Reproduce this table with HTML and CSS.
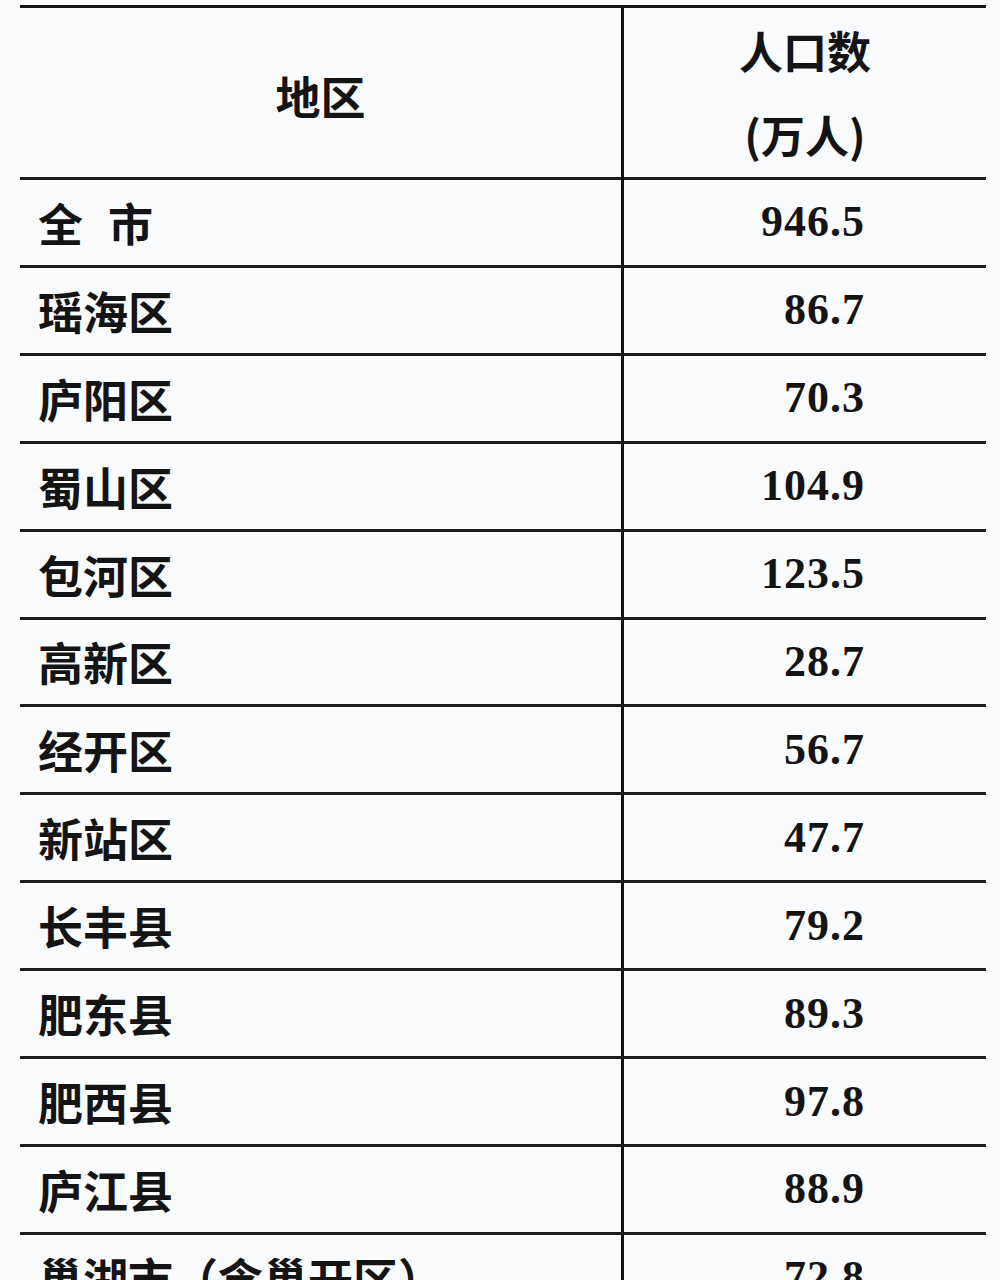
FILE: index.html
```html
<!DOCTYPE html>
<html lang="zh-CN">
<head>
<meta charset="utf-8">
<title>人口数</title>
<link rel="stylesheet" href="styles.css">
</head>
<body>
<div class="sheet">
  <div class="row head">
    <div class="cell name hname">地区</div>
    <div class="cell val hval"><div>人口数</div><div>(万人)</div></div>
  </div>
  <div class="row"><div class="cell name"><span class="wide">全</span>市</div><div class="cell val">946.5</div></div>
  <div class="row"><div class="cell name">瑶海区</div><div class="cell val">86.7</div></div>
  <div class="row"><div class="cell name">庐阳区</div><div class="cell val">70.3</div></div>
  <div class="row"><div class="cell name">蜀山区</div><div class="cell val">104.9</div></div>
  <div class="row"><div class="cell name">包河区</div><div class="cell val">123.5</div></div>
  <div class="row"><div class="cell name">高新区</div><div class="cell val">28.7</div></div>
  <div class="row"><div class="cell name">经开区</div><div class="cell val">56.7</div></div>
  <div class="row"><div class="cell name">新站区</div><div class="cell val">47.7</div></div>
  <div class="row"><div class="cell name">长丰县</div><div class="cell val">79.2</div></div>
  <div class="row"><div class="cell name">肥东县</div><div class="cell val">89.3</div></div>
  <div class="row"><div class="cell name">肥西县</div><div class="cell val">97.8</div></div>
  <div class="row"><div class="cell name">庐江县</div><div class="cell val">88.9</div></div>
  <div class="row"><div class="cell name">巢湖市（含巢开区）</div><div class="cell val">72.8</div></div>
</div>
</body>
</html>
```
FILE: styles.css
```css
html, body {
  margin: 0;
  padding: 0;
  background: #fafbfd;
}
body {
  height: 1280px;
  overflow: hidden;
  color: #141414;
}
.sheet {
  margin: 5px 0 0 20px;
  width: 966px;
  border-top: 3px solid #161616;
}
.row {
  display: grid;
  grid-template-columns: 604px 362px;
  height: 87.92px;
  box-sizing: border-box;
  border-bottom: 3px solid #1c1c1c;
}
.row.head {
  height: 172px;
}
.cell {
  display: flex;
  align-items: center;
  box-sizing: border-box;
}
.name {
  border-right: 3px solid #111;
  padding-left: 18px;
  font-family: "Noto Sans CJK SC", "Noto Sans", sans-serif;
  font-weight: 700;
  font-size: 45px;
  line-height: 1;
}
.wide {
  margin-right: 25px;
}
.val {
  justify-content: flex-end;
  padding-right: 121px;
  font-family: "Liberation Serif", "Times New Roman", serif;
  font-weight: 700;
  font-size: 44px;
  letter-spacing: 1px;
  line-height: 1;
}
.hname {
  justify-content: center;
  padding-left: 0;
  padding-bottom: 4px;
}
.hval {
  flex-direction: column;
  justify-content: center;
  padding-right: 0;
  padding-bottom: 10px;
  font-family: "Noto Sans CJK SC", "Noto Sans", sans-serif;
  letter-spacing: 0;
  line-height: 84px;
  text-align: center;
}
```
